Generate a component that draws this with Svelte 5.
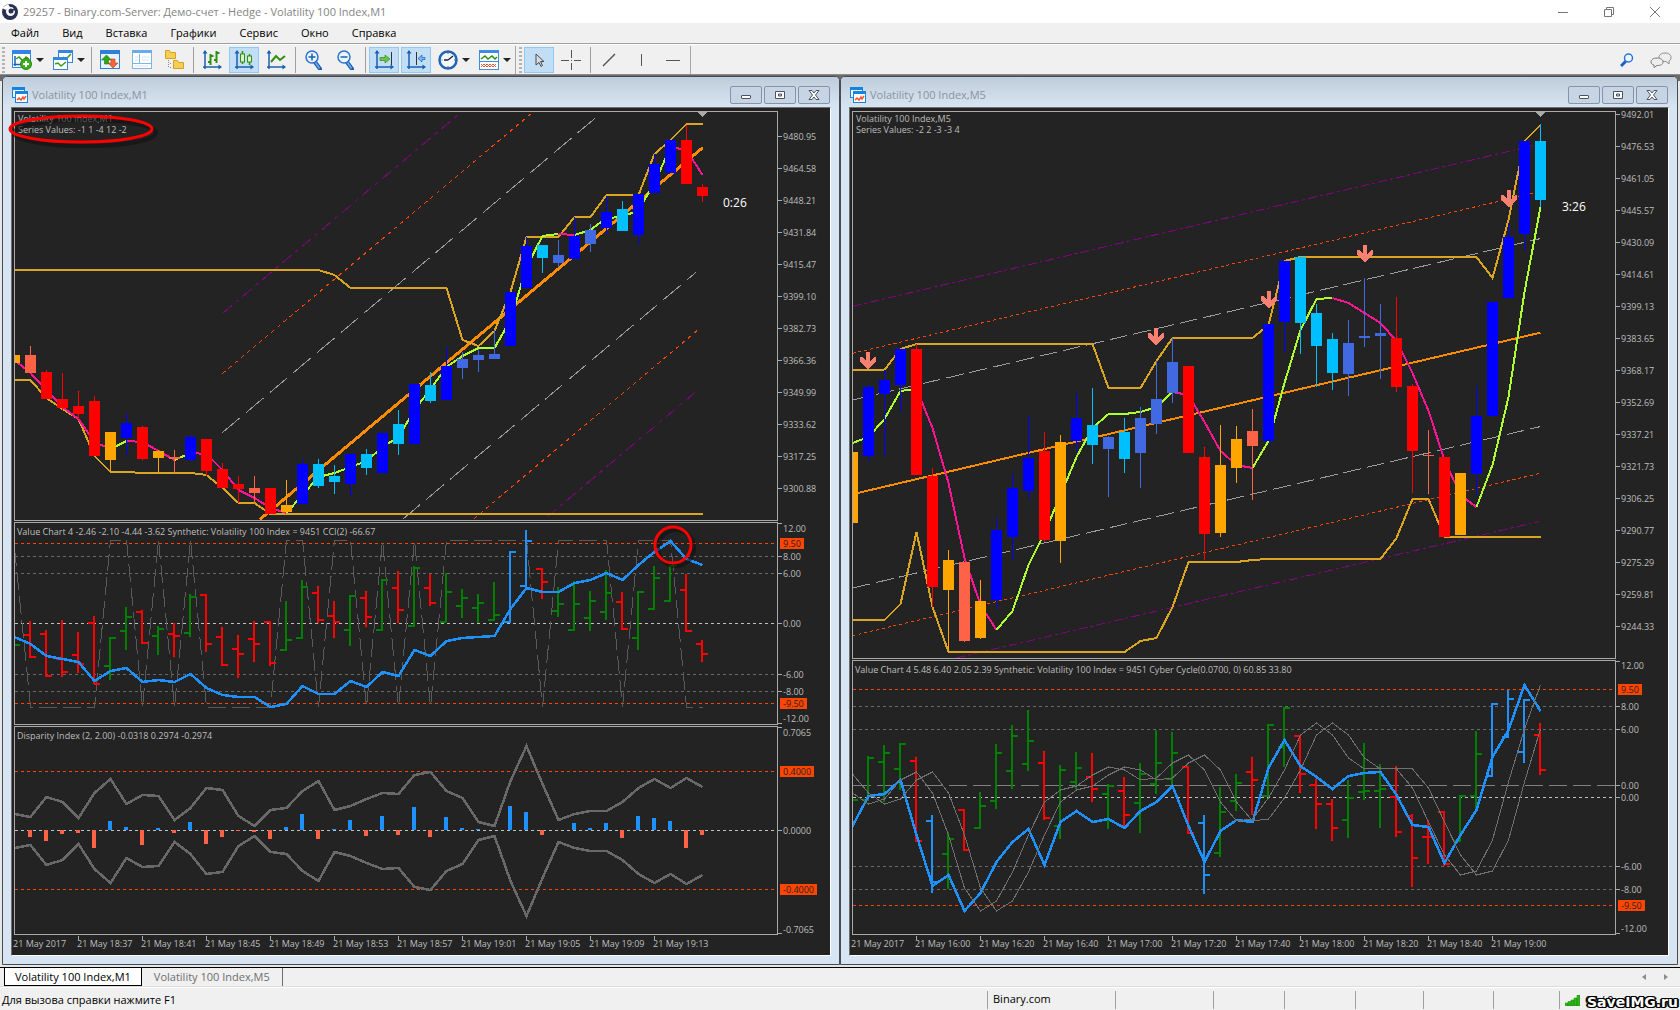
<script>
  const STEP = 16;
  const inks = {
    b: '#0000ff', c: '#00bfff', y: '#4169e1', r: '#ff0000', o: '#ffa500', t: '#ff6347',
    g: '#008000', d: '#1e90ff', p: '#ff1493', l: '#adff2f'
  };
  const GOLD = '#daa520';
  const GREY = '#696969';

  // Series values are stored in thirds of a pixel, measured from the pane's own origin.
  const cx = (i) => i * STEP - 1;
  const vy = (v, o) => Math.round(v / 3) + o;
  const path = (pts, o) => pts.map(([i, v]) => `${cx(i) + 0.5},${vy(v, o)}`).join(' ');
  const each = (values) => values.map((v, i) => [i, v]);
  const mirror = (values, axis) => values.map((v) => axis * 2 - v);

  const disparity = [898, 906, 845, 861, 909, 833, 791, 867, 839, 844, 915, 880, 818, 825, 904, 934, 886, 878, 828, 797, 885, 874, 852, 833, 836, 781, 770, 829, 850, 922, 933, 798, 692, 808, 914, 898, 889, 887, 860, 819, 792, 819, 788, 817];
  const cycle = [413, 447, 432, 375, 352, 415, 540, 700, 768, 739, 650, 540, 440, 406, 393, 360, 337, 345, 376, 368, 325, 301, 345, 440, 498, 492, 430, 345, 240, 203, 240, 310, 341, 340, 342, 400, 500, 600, 661, 648, 555, 380, 222, 90];

  const ladder = (first, step, from, gap, count) =>
    Array.from({ length: count }, (_, k) => ({ v: from + gap * k, text: (first - step * k).toFixed(2) }));

  const charts = [
    {
      id: 'm1',
      title: 'Volatility 100 Index,M1',
      mark: true,
      x0: -15,
      times: ['2017', '18:37', '18:41', '18:45', '18:49', '18:53', '18:57', '19:01', '19:05', '19:09', '19:13'],
      panes: [
        {
          y0: -12,
          marker: true,
          notes: [{ x: 3, y: 10, text: 'Volatility 100 Index,M1' }, { x: 3, y: 21, text: 'Series Values: -1 1 -4 12 -2' }],
          clock: { x: 708, y: 95, text: '0:26' },
          channels: [
            [668, 640, 1377, 42, '#800080', '12 5 4 5'], [667, 821, 1592, 42, '#ff4500', '4 4'], [667, 998, 1800, 42, '#9c9c9c', '23 8'],
            [1208, 1258, 2088, 517, '#9c9c9c', '23 8'], [1422, 1256, 2096, 688, '#ff4500', '4 4'], [1640, 1252, 2096, 868, '#800080', '12 5 4 5'],
            [780, 1258, 2108, 143, '#ff8c00', '', 3]
          ],
          lines: [
            { color: GOLD, w: 2, pts: [[0, 510], [19, 510], [20, 526], [21, 564], [27, 564], [28, 719], [29, 738], [30, 692], [31, 576], [32, 411], [34, 411], [35, 351], [36, 351], [37, 285], [39, 285], [40, 162], [41, 120], [42, 72], [43, 72]] },
            { color: GOLD, w: 2, pts: [[0, 840], [1, 840], [2, 895], [3, 927], [4, 957], [5, 1068], [6, 1116], [9, 1118], [11, 1119], [12, 1126], [13, 1163], [14, 1209], [15, 1209], [16, 1242], [43, 1242]] }
          ],
          trend: [780, 819, 870, 920, 957, 1025, 1047, 1022, 1027, 1052, 1080, 1060, 1062, 1110, 1170, 1195, 1225, 1238, 1185, 1130, 1120, 1100, 1082, 1040, 1010, 930, 868, 800, 769, 744, 744, 660, 500, 408, 402, 405, 390, 355, 350, 330, 250, 140, 150, 226],
          runs: [['p', 0, 6], ['l', 6, 7], ['p', 7, 10], ['l', 10, 11], ['p', 11, 17], ['l', 17, 34], ['p', 34, 35], ['l', 35, 41], ['p', 41, 43]],
          candles: [
            ['o', 765, 765, 789, 789], ['t', 738, 765, 819, 819], ['r', 810, 816, 897, 897], ['r', 819, 897, 924, 930], ['r', 873, 918, 942, 957], ['r', 888, 903, 1068, 1068], ['o', 996, 996, 1080, 1116], ['b', 941, 969, 1014, 1065], ['r', 978, 981, 1077, 1080], ['o', 1050, 1053, 1074, 1118], ['t', 1050, 1071, 1077, 1120],
            ['b', 1006, 1011, 1079, 1085], ['r', 1017, 1017, 1113, 1128], ['r', 1090, 1107, 1164, 1164], ['r', 1128, 1152, 1167, 1210], ['t', 1128, 1164, 1179, 1212], ['r', 1164, 1164, 1242, 1242], ['o', 1140, 1215, 1236, 1236], ['b', 1077, 1091, 1211, 1211], ['c', 1077, 1092, 1158, 1164], ['c', 1095, 1128, 1146, 1182], ['b', 1062, 1062, 1151, 1187],
            ['c', 1047, 1062, 1104, 1125], ['b', 998, 998, 1119, 1119], ['c', 930, 972, 1032, 1065], ['b', 852, 852, 1031, 1031], ['c', 816, 855, 903, 909], ['b', 741, 798, 899, 899], ['y', 756, 777, 804, 837], ['y', 747, 765, 780, 816], ['y', 690, 762, 777, 777], ['b', 576, 576, 738, 738], ['b', 411, 437, 563, 563],
            ['c', 435, 435, 474, 519], ['y', 420, 465, 489, 502], ['b', 352, 408, 477, 477], ['y', 372, 390, 432, 456], ['b', 287, 336, 384, 400], ['c', 303, 327, 393, 393], ['b', 282, 282, 405, 432], ['b', 162, 192, 279, 279], ['b', 120, 120, 218, 218], ['r', 75, 120, 252, 252], ['r', 252, 261, 288, 306]
          ],
          labels: ladder(9480.95, 16.37, 109, 96, 12)
        },
        {
          y0: -8,
          notes: [{ x: 2, y: 12, text: 'Value Chart 4 -2.46 -2.10 -4.44 -3.62 Synthetic: Volatility 100 Index = 9451 CCI(2) -66.67' }],
          levels: [[85, '#ff4500'], [124, GREY], [175, GREY], [325, '#c0c0c0'], [478, GREY], [529, GREY], [565, '#ff4500']],
          back: [{ color: '#5a5a5a', w: 1, dash: '18 6', pts: [[0, 100], [1, 577], [5, 577], [6, 76], [7, 76], [8, 577], [9, 76], [10, 577], [11, 76], [12, 577], [16, 577], [17, 76], [18, 76], [19, 577], [20, 76], [21, 76], [22, 577], [23, 76], [24, 577], [25, 76], [26, 577], [27, 76], [32, 76], [33, 577], [34, 76], [37, 76], [38, 577], [39, 76], [41, 76], [42, 577], [43, 577]] }],
          bars: [
            ['g', 390, 392, 390, 390], ['r', 318, 428, 360, 427], ['r', 345, 485, 356, 483], ['r', 315, 486, 433, 471], ['r', 351, 473, 420, 447], ['r', 303, 508, 324, 507], ['g', 367, 497, 453, 369], ['g', 276, 405, 348, 306], ['r', 286, 388, 291, 384], ['g', 333, 419, 363, 342], ['r', 324, 425, 356, 363],
            ['g', 237, 365, 354, 246], ['r', 238, 413, 240, 386], ['r', 336, 452, 366, 450], ['r', 360, 489, 402, 416], ['r', 318, 440, 372, 386], ['r', 318, 453, 321, 444], ['g', 258, 407, 405, 375], ['g', 195, 371, 369, 216], ['r', 213, 323, 234, 314], ['r', 258, 369, 302, 321], ['g', 240, 392, 345, 243],
            ['r', 228, 335, 248, 306], ['g', 192, 347, 345, 195], ['r', 168, 323, 218, 285], ['g', 153, 335, 333, 158], ['r', 177, 272, 219, 264], ['g', 175, 323, 321, 231], ['g', 222, 308, 272, 249], ['g', 237, 323, 279, 264], ['g', 201, 317, 315, 300], ['d', 108, 323, 321, 111], ['d', 45, 215, 213, 78],
            ['r', 159, 251, 162, 200], ['g', 216, 305, 288, 267], ['g', 197, 347, 345, 267], ['g', 228, 347, 308, 258], ['g', 165, 315, 291, 234], ['r', 231, 344, 261, 342], ['g', 228, 405, 369, 231], ['g', 153, 284, 282, 189], ['g', 150, 260, 258, 153], ['r', 177, 350, 225, 348], ['r', 375, 441, 386, 416]
          ],
          front: [{ color: '#1e90ff', w: 2.5, pts: each([367, 388, 422, 433, 441, 498, 468, 458, 500, 494, 501, 476, 520, 541, 545, 547, 576, 566, 512, 537, 537, 499, 517, 470, 484, 404, 423, 378, 370, 365, 362, 282, 218, 230, 230, 204, 196, 173, 195, 150, 110, 77, 133, 150]) }],
          ring: { x: 658, y: 22 },
          labels: [
            { v: 38, tick: 24, text: '12.00' }, { v: 85, text: '9.50', badge: 24 }, { v: 124, text: '8.00' }, { v: 175, text: '6.00' }, { v: 325, text: '0.00' },
            { v: 478, text: '-6.00' }, { v: 529, text: '-8.00' }, { v: 565, text: '-9.50', badge: 27 }, { v: 610, tick: 625, text: '-12.00' }
          ]
        },
        {
          y0: -212,
          notes: [{ x: 2, y: 12, text: 'Disparity Index (2, 2.00) -0.0318 0.2974 -0.2974' }],
          levels: [[769, '#ff4500'], [946, '#c0c0c0'], [1123, '#ff4500']],
          zero: 946,
          hist: [0, -20, -32, -11, -8, -53, 28, 10, -45, 7, -8, 25, -41, -20, -2, -5, -27, 10, 49, -26, 4, 30, -17, 43, -14, 70, -20, 40, 7, 4, 0, 73, 55, -14, 0, 22, 7, 22, -23, 43, 37, 28, -53, -14],
          front: [{ color: GREY, w: 2.5, pts: each(disparity) }, { color: GREY, w: 2.5, pts: each(mirror(disparity, 948)) }],
          labels: [
            { v: 650, tick: 637, text: '0.7065' }, { v: 769, text: '0.4000', badge: 34 }, { v: 946, text: '0.0000' },
            { v: 1123, text: '-0.4000', badge: 37 }, { v: 1241, tick: 1255, text: '-0.7065' }
          ]
        }
      ]
    },
    {
      id: 'm5',
      title: 'Volatility 100 Index,M5',
      x0: -13,
      times: ['2017', '16:00', '16:20', '16:40', '17:00', '17:20', '17:40', '18:00', '18:20', '18:40', '19:00'],
      panes: [
        {
          y0: -42,
          marker: true,
          notes: [{ x: 3, y: 10, text: 'Volatility 100 Index,M5' }, { x: 3, y: 21, text: 'Series Values: -2 2 -3 -3 4' }],
          clock: { x: 709, y: 99, text: '3:26' },
          channels: [
            [38, 709, 2078, 227, '#800080', '9 3 3 3'], [38, 850, 2078, 370, '#ff4500', '3 3'], [38, 990, 2100, 506, '#9c9c9c', '18 6'],
            [38, 1554, 2100, 1070, '#9c9c9c', '18 6'], [38, 1697, 2096, 1211, '#ff4500', '3 3'], [348, 1764, 2096, 1355, '#800080', '9 3 3 3'],
            [53, 1269, 2101, 788, '#ff8c00', '', 2]
          ],
          lines: [
            { color: GOLD, w: 2, pts: [[0, 900], [2, 900], [3, 837], [4, 822], [15, 822], [16, 954], [18, 954], [19, 873], [20, 804], [25, 804], [26, 765], [27, 573], [28, 561], [39, 561], [40, 624], [41, 450], [42, 213], [43, 165]] },
            { color: GOLD, w: 2, pts: [[0, 1650], [2, 1650], [3, 1602], [4, 1387], [5, 1612], [6, 1746], [17, 1746], [18, 1713], [19, 1705], [20, 1612], [21, 1477], [24, 1477], [25, 1469], [26, 1467], [33, 1467], [34, 1403], [35, 1287], [36, 1287], [37, 1400], [43, 1400]] }
          ],
          trend: [1119, 1100, 1047, 963, 958, 1075, 1240, 1463, 1605, 1680, 1622, 1485, 1390, 1275, 1160, 1075, 1032, 1032, 1025, 1010, 967, 975, 1055, 1142, 1185, 1195, 1113, 940, 780, 687, 684, 700, 730, 760, 812, 910, 1022, 1170, 1275, 1310, 1185, 980, 665, 410],
          runs: [['l', 0, 4], ['p', 4, 9], ['l', 9, 20], ['p', 20, 25], ['l', 25, 30], ['p', 30, 39], ['l', 39, 43]],
          arrows: [[15, 256], [303, 232], [416, 195], [512, 149], [656, 94]],
          candles: [
            ['o', 1146, 1146, 1358, 1358], ['b', 945, 951, 1157, 1173], ['b', 900, 930, 971, 1157], ['b', 837, 837, 945, 1025], ['r', 822, 837, 1215, 1215], ['r', 1194, 1218, 1551, 1611], ['o', 1440, 1470, 1560, 1746], ['t', 1476, 1476, 1713, 1716], ['o', 1530, 1593, 1704, 1707], ['b', 1344, 1380, 1590, 1618], ['b', 1212, 1254, 1401, 1470],
            ['b', 1038, 1164, 1263, 1287], ['r', 1086, 1143, 1410, 1416], ['o', 1095, 1116, 1413, 1479], ['b', 969, 1044, 1113, 1146], ['c', 954, 1065, 1125, 1182], ['y', 1097, 1101, 1137, 1281], ['c', 1044, 1086, 1167, 1209], ['y', 1011, 1044, 1149, 1254], ['y', 873, 987, 1062, 1092], ['y', 804, 876, 969, 999], ['r', 888, 888, 1149, 1149],
            ['r', 1131, 1161, 1392, 1470], ['o', 1065, 1185, 1389, 1401], ['o', 1068, 1107, 1194, 1239], ['t', 1017, 1083, 1128, 1290], ['b', 762, 762, 1113, 1113], ['b', 573, 573, 755, 846], ['c', 561, 561, 759, 852], ['c', 702, 729, 828, 951], ['c', 789, 807, 909, 960], ['y', 750, 819, 912, 978], ['y', 624, 798, 804, 831],
            ['y', 702, 789, 798, 927], ['r', 681, 804, 951, 966], ['r', 942, 948, 1143, 1269], ['t', 1080, 1155, 1158, 1272], ['r', 1161, 1161, 1401, 1401], ['o', 1209, 1209, 1395, 1395], ['b', 948, 1038, 1211, 1275], ['b', 696, 696, 1037, 1037], ['b', 459, 501, 683, 683], ['b', 213, 213, 491, 543], ['c', 162, 213, 390, 410]
          ],
          labels: ladder(9492.01, 15.48, 133, 96, 17)
        },
        {
          y0: -6,
          notes: [{ x: 2, y: 12, text: 'Value Chart 4 5.48 6.40 2.05 2.39 Synthetic: Volatility 100 Index = 9451 Cyber Cycle(0.0700, 0) 60.85 33.80' }],
          levels: [[103, '#ff4500'], [154, GREY], [223, GREY], [391, '#808080', '18 6'], [427, '#c0c0c0'], [634, GREY], [703, GREY], [751, '#ff4500']],
          back: [],
          bars: [
            ['g', 435, 437, 435, 435], ['g', 303, 437, 435, 309], ['g', 270, 440, 321, 294], ['g', 264, 404, 342, 267], ['r', 306, 560, 318, 558], ['d', 480, 713, 498, 680], ['g', 531, 702, 597, 552], ['r', 462, 587, 465, 585], ['g', 411, 521, 519, 453], ['g', 267, 461, 438, 294], ['g', 210, 402, 348, 243],
            ['g', 165, 347, 327, 258], ['r', 288, 494, 324, 489], ['g', 330, 551, 513, 345], ['g', 291, 402, 381, 339], ['r', 294, 440, 366, 402], ['g', 387, 521, 417, 393], ['r', 366, 518, 408, 480], ['g', 324, 533, 444, 356], ['g', 225, 416, 387, 324], ['g', 231, 393, 372, 294], ['r', 333, 536, 336, 534],
            ['d', 480, 716, 504, 660], ['g', 396, 605, 594, 471], ['g', 357, 467, 438, 384], ['r', 306, 480, 351, 375], ['g', 207, 425, 423, 210], ['g', 156, 335, 276, 159], ['r', 240, 413, 243, 357], ['r', 372, 521, 389, 447], ['r', 432, 557, 447, 519], ['g', 375, 548, 495, 429], ['g', 264, 434, 411, 408],
            ['g', 327, 518, 408, 402], ['r', 333, 545, 426, 531], ['r', 477, 695, 483, 609], ['r', 495, 627, 546, 546], ['r', 468, 632, 471, 627], ['g', 420, 560, 558, 423], ['g', 228, 470, 423, 297], ['d', 144, 365, 363, 147], ['d', 105, 248, 246, 132], ['d', 132, 323, 291, 135], ['r', 204, 360, 240, 345]
          ],
          front: [
            { color: '#1e90ff', w: 2.5, pts: each([512, 423, 416, 375, 540, 692, 660, 768, 714, 621, 562, 522, 630, 500, 467, 500, 491, 519, 467, 440, 394, 512, 620, 528, 495, 500, 340, 255, 333, 365, 402, 364, 355, 350, 420, 510, 516, 624, 540, 465, 305, 225, 90, 168]) },
            { color: '#707070', w: 1, pts: each(cycle) },
            { color: '#707070', w: 1, pts: each([357, ...cycle.slice(0, -1)]) }
          ],
          labels: [
            { v: 31, tick: 18, text: '12.00' }, { v: 103, text: '9.50', badge: 24 }, { v: 154, text: '8.00' }, { v: 223, text: '6.00' }, { v: 391, text: '0.00' }, { v: 427, text: '0.00' },
            { v: 634, text: '-6.00' }, { v: 703, text: '-8.00' }, { v: 751, text: '-9.50', badge: 27 }, { v: 820, tick: 835, text: '-12.00' }
          ]
        }
      ]
    }
  ];

  const menu = ['Файл', 'Вид', 'Вставка', 'Графики', 'Сервис', 'Окно', 'Справка'];
  const standard = [
    { icon: 'newchart', label: 'Новый график', drop: true }, { icon: 'profiles', label: 'Профили', drop: true }, null,
    { icon: 'market', label: 'Обзор рынка' }, { icon: 'data', label: 'Окно данных' }, { icon: 'navigator', label: 'Навигатор' }, null,
    { icon: 'bars', label: 'Бары' }, { icon: 'candles', label: 'Свечи', on: true }, { icon: 'line', label: 'Линия' }, null,
    { icon: 'zoomin', label: 'Увеличить' }, { icon: 'zoomout', label: 'Уменьшить' }, null,
    { icon: 'scroll', label: 'Автопрокрутка', on: true }, { icon: 'shift', label: 'Сдвиг графика', on: true },
    { icon: 'period', label: 'Период', drop: true }, { icon: 'template', label: 'Шаблоны', drop: true }
  ];
  const drawing = [
    { icon: 'cursor', label: 'Курсор', on: true }, { icon: 'cross', label: 'Перекрестие' }, null,
    { icon: 'trendline', label: 'Трендовая линия' }, { icon: 'vline', label: 'Вертикальная линия' }, { icon: 'hline', label: 'Горизонтальная линия' }
  ];
</script>

{#snippet axes()}
  <path d="M3 1v18M1 17h18" stroke="#1a5fb4" stroke-width="1.500" fill="none" />
  <path d="M3 0l-2.500 3.500h5zM20 17l-3.500 -2.500v5z" fill="#1a5fb4" />
{/snippet}

{#snippet glass(plus)}
  <path d="M11 12l5 7" stroke="#1c5fae" stroke-width="4" stroke-linecap="round" />
  <path d="M11.500 12.500l4 6" stroke="#6fb0ee" stroke-width="1.500" />
  <circle cx="8" cy="7" r="6" fill="#eaf5ff" stroke="#2c74c9" stroke-width="1.500" />
  <path d={plus ? 'M4.500 7h7M8 3.500v7' : 'M4.500 7h7'} stroke="#1c5fae" stroke-width="1.500" />
{/snippet}

{#snippet pic(name)}
  <svg class="pic" viewBox="0 0 20 20" aria-hidden="true">
    {#if name === 'newchart'}
      <rect x=".5" y=".5" width="18" height="17" fill="#fff" stroke="#3584e4" /><rect x="0" y="0" width="19" height="4" fill="#3584e4" />
      <path d="M3 6v10M1.500 14.500h14" stroke="#1a5fb4" stroke-width="1.500" fill="none" />
      <path d="M4 9l3-2 4 4 3-4 3 2" stroke="#2f9e12" stroke-width="1.500" fill="none" />
      <circle cx="14" cy="14" r="5.500" fill="#3fae1c" stroke="#2b8a10" /><path d="M14 11v6M11 14h6" stroke="#fff" stroke-width="2" />
    {:else if name === 'profiles'}
      <rect x="5.500" y=".5" width="14" height="12" fill="#fff" stroke="#3584e4" /><rect x="5" y="0" width="15" height="3" fill="#3584e4" />
      <path d="M10 7l3 2 5-5" stroke="#2f9e12" stroke-width="1.500" fill="none" />
      <rect x=".5" y="7.500" width="14" height="12" fill="#fff" stroke="#3584e4" /><rect x="0" y="7" width="15" height="3" fill="#3584e4" />
      <path d="M2 14l3-1 3 3 5-4" stroke="#2f9e12" stroke-width="1.500" fill="none" />
    {:else if name === 'market'}
      <rect x=".5" y=".5" width="19" height="18" fill="#e6f2ff" stroke="#2f7fd6" /><rect x="0" y="0" width="20" height="4" fill="#2f7fd6" />
      <path d="M6.500 5l5 5h-3v4h-4v-4h-3z" fill="#2fa51a" stroke="#1e7a0e" stroke-width=".6" />
      <path d="M13 18l5-5h-3v-4h-4v4h-3z" fill="#f2673a" stroke="#c23c12" stroke-width=".6" />
    {:else if name === 'data'}
      <rect x=".5" y=".5" width="19" height="18" fill="#fff" stroke="#7db4ea" /><rect x="0" y="0" width="20" height="3" fill="#6aabec" />
      <path d="M7.500 4v9M1 13.500h18" stroke="#7db4ea" /><path d="M3 7h3M3 10h3M10 7h7M10 10h7M3 16h13" stroke="#d5e3f1" />
    {:else if name === 'navigator'}
      <path d="M1.500 .5h4l1 2h5v6h-10z" fill="#f6cf50" stroke="#d3a12b" />
      <path d="M4.500 10v7M6 13.500h2M6 17.500h2" stroke="#8a8a8a" fill="none" stroke-dasharray="1 1" />
      <path d="M9.500 10.500h4l1 2h5v6h-10z" fill="#f6cf50" stroke="#d3a12b" />
    {:else if name === 'bars'}
      {@render axes()}<path d="M8.500 4v11M6 12h2.500M8.500 6h3M14.500 1v12M14.500 3h3M12 10h2.500" stroke="#2f8f12" stroke-width="2" fill="none" />
    {:else if name === 'candles'}
      {@render axes()}<path d="M8.500 1v13M15.500 4v11" stroke="#2f8f12" stroke-width="1.500" />
      <rect x="6.500" y="4" width="4" height="8" fill="#d9f2c9" stroke="#2f8f12" /><rect x="13.500" y="6" width="4" height="6" fill="#d9f2c9" stroke="#2f8f12" />
    {:else if name === 'line'}
      {@render axes()}<path d="M5 12l5-6 4 4 5-4" stroke="#2f8f12" stroke-width="2" fill="none" />
    {:else if name === 'zoomin'}
      {@render glass(true)}
    {:else if name === 'zoomout'}
      {@render glass(false)}
    {:else if name === 'scroll'}
      {@render axes()}<path d="M6 7.500h5v-2.500l5 4-5 4v-2.500H6z" fill="#6cc24a" stroke="#2f8f12" stroke-width=".7" /><path d="M17.500 2v13" stroke="#333" />
    {:else if name === 'shift'}
      {@render axes()}<path d="M10.500 2v13" stroke="#333" /><path d="M19 7.500h-3v-2.500l-4 3.500 4 3.500v-2.500h3z" fill="#7db9f5" stroke="#1a5fb4" stroke-width=".7" />
    {:else if name === 'period'}
      <circle cx="10" cy="10" r="8.500" fill="#f2f8ff" stroke="#2463b0" stroke-width="2.500" /><path d="M10 10l5-4M10 10H6" stroke="#222" stroke-width="1.300" />
      <path d="M10 3v1M10 16v1M3.500 10h1M16 10h1" stroke="#555" />
    {:else if name === 'template'}
      <rect x=".5" y=".5" width="19" height="19" fill="#fff" stroke="#3a8de0" /><rect x="0" y="0" width="20" height="3" fill="#3a8de0" /><path d="M1 11.500h18" stroke="#3a8de0" />
      <path d="M2 9l4-3 3 3 4-3 3 3 2-2" stroke="#2f8f12" stroke-width="1.500" fill="none" />
      <path d="M2 17l3-3 3 3 3-3 3 3 3-3M2 14l3 3 3-3 3 3 3-3 3 3" stroke="#e0563a" fill="none" />
    {:else if name === 'cursor'}
      <path d="M7 4v11l3-2.500 2 4 1.500-1-2-4h3.500z" fill="#d4dbe2" stroke="#4a4a4a" />
    {:else if name === 'cross'}
      <path d="M10.500 0v8M10.500 13v7M0 10.500h8M13 10.500h7" stroke="#555" fill="none" /><rect x="10" y="10" width="1" height="1" fill="#555" />
    {:else if name === 'trendline'}
      <path d="M4 16L16 4" stroke="#555" stroke-width="1.500" />
    {:else if name === 'vline'}
      <path d="M10.500 4v12" stroke="#555" />
    {:else if name === 'hline'}
      <path d="M3 10.500h14" stroke="#555" />
    {/if}
  </svg>
{/snippet}

{#snippet tools(items)}
  {#each items as tool}
    {#if tool}
      <button class="tool" class:on={tool.on} class:drop={tool.drop} aria-label={tool.label}>
        {@render pic(tool.icon)}
        {#if tool.drop}<span class="caret"></span>{/if}
      </button>
    {:else}
      <span class="sep"></span>
    {/if}
  {/each}
{/snippet}

{#snippet curve(line, y0)}
  <polyline points={path(line.pts, y0)} fill="none" stroke={line.color} stroke-width={line.w} stroke-dasharray={line.dash} />
{/snippet}

{#snippet plot(pane, x0)}
  <svg class="plot">
    {#each pane.levels ?? [] as [v, color, dash]}
      <line x1="0" x2="100%" y1={vy(v - 1, pane.y0) + 0.5} y2={vy(v - 1, pane.y0) + 0.5} stroke={color} stroke-dasharray={dash ?? '3 3'} />
    {/each}
    {#each pane.channels ?? [] as [x1, y1, x2, y2, color, dash, w]}
      <line x1={x1 / 3 + x0} y1={y1 / 3 + pane.y0} x2={x2 / 3 + x0} y2={y2 / 3 + pane.y0} stroke={color} stroke-width={w ?? 1} stroke-dasharray={dash} />
    {/each}
    {#each pane.lines ?? [] as line}{@render curve(line, pane.y0)}{/each}
    {#each pane.back ?? [] as line}{@render curve(line, pane.y0)}{/each}
    {#each pane.runs ?? [] as [ink, from, to]}
      <polyline points={path(each(pane.trend).slice(from, to + 1), pane.y0)} fill="none" stroke={inks[ink]} stroke-width="2" />
    {/each}
    {#each pane.arrows ?? [] as [x, y]}
      <path transform="translate({x} {y})" d="M-2 -16h4v9l4-4h2v4l-7 8h-2l-7-8v-4h2l4 4z" fill="#fa8072" />
    {/each}
    {#each pane.candles ?? [] as [ink, high, top, bottom, low], i}
      <rect x={cx(i)} y={vy(high, pane.y0)} width="1" height={Math.round((low - high) / 3)} fill={inks[ink]} />
      <rect x={cx(i) - 5} y={vy(top, pane.y0)} width="11" height={Math.max(1, Math.round((bottom - top) / 3))} fill={inks[ink]} />
    {/each}
    {#each pane.bars ?? [] as [ink, high, low, open, close], i}
      <rect x={cx(i) - 1} y={vy(high, pane.y0)} width="2" height={Math.round((low - high) / 3)} fill={inks[ink]} />
      <rect x={cx(i) - 6} y={vy(open, pane.y0) - 1} width="6" height="2" fill={inks[ink]} />
      <rect x={cx(i)} y={vy(close, pane.y0) - 1} width="6" height="2" fill={inks[ink]} />
    {/each}
    {#each pane.hist ?? [] as h, i}
      <rect x={cx(i) - 2} y={h > 0 ? vy(pane.zero - h, pane.y0) : vy(pane.zero, pane.y0)} width="4" height={Math.round(Math.abs(h) / 3)} fill={h > 0 ? '#1e90ff' : '#ff6347'} />
    {/each}
    {#each pane.front ?? [] as line}{@render curve(line, pane.y0)}{/each}
    {#if pane.marker}<path d="M682 0h10l-5 5z" fill="#a9a9a9" />{/if}
    {#if pane.ring}
      <circle class="ring shade" cx={pane.ring.x + 3} cy={pane.ring.y + 3} r="18" />
      <circle class="ring" cx={pane.ring.x} cy={pane.ring.y} r="18" />
    {/if}
    {#each pane.notes as note}<text x={note.x} y={note.y}>{note.text}</text>{/each}
    {#if pane.clock}<text class="clock" x={pane.clock.x} y={pane.clock.y}>{pane.clock.text}</text>{/if}
  </svg>
{/snippet}

{#snippet scale(pane)}
  <svg class="scale">
    {#each pane.labels as label}
      {#if label.badge}
        <rect x="2" y={vy(label.v, pane.y0) - 4} width={label.badge} height="11" fill="#ff4500" />
      {:else}
        <rect x="0" y={vy((label.tick ?? label.v) - 1, pane.y0 + 1)} width="4" height="1" fill="#a9a9a9" />
      {/if}
      <text class:dark={label.badge} x="5" y={vy(label.v, pane.y0) + 5}>{label.text}</text>
    {/each}
  </svg>
{/snippet}

<div class="app">
  <header class="titlebar">
    <svg class="logo" viewBox="0 0 16 16" aria-hidden="true">
      <circle cx="8" cy="8" r="8" fill="#2a3052" /><path d="M0 4L6 0 8 3 4 6z" fill="#fff" /><circle cx="8.500" cy="7.500" r="4.500" fill="#fff" /><circle cx="9" cy="7" r="2.500" fill="#2a3052" /><path d="M9 6l5-3 1 4z" fill="#2a3052" />
    </svg>
    <h1>29257 - Binary.com-Server: Демо-счет - Hedge - Volatility 100 Index,M1</h1>
    <div class="syskeys">
      <button aria-label="Свернуть"><svg viewBox="0 0 12 12"><path d="M1 6.500h10" /></svg></button>
      <button aria-label="Развернуть"><svg viewBox="0 0 12 12"><path d="M1.500 3.500h7v7h-7zM3.500 3V1.500h7v7H9" /></svg></button>
      <button aria-label="Закрыть"><svg viewBox="0 0 12 12"><path d="M1 1l10 10M11 1L1 11" /></svg></button>
    </div>
  </header>

  <nav class="menu">
    {#each menu as item}<button>{item}</button>{/each}
  </nav>

  <div class="toolbar">
    <span class="grip"></span>
    <div class="group">{@render tools(standard)}</div>
    <span class="grip second"></span>
    <div class="group">{@render tools(drawing)}</div>
    <div class="right">
      <button class="mini" aria-label="Поиск">
        <svg viewBox="0 0 14 14"><path d="M6 8l-5 5" stroke="#1d5fc4" stroke-width="3" /><circle cx="8.500" cy="5" r="4" fill="#eef6ff" stroke="#2a74d8" stroke-width="1.500" /></svg>
      </button>
      <button class="mini wide" aria-label="Чат">
        <svg viewBox="0 0 22 16"><path d="M15 1c4 0 6 2 6 4.500 0 2-1 3-2 3.500v3l-3-2.500c-5 0-7-1.500-7-4S11 1 15 1z" fill="#eee" stroke="#8a8a8a" /><path d="M7 6c3.500 0 6 1.500 6 4s-2 3.500-6 3.500L4 15.500v-2.500c-2-.5-3-1.500-3-3C1 7.500 3.500 6 7 6z" fill="#eee" stroke="#7c7c7c" /></svg>
      </button>
    </div>
  </div>

  <main class="desk">
    {#each charts as chart}
      <section class="window" aria-label={chart.title}>
        <div class="caption">
          <svg class="badge" viewBox="0 0 16 16" aria-hidden="true">
            <rect x=".5" y=".5" width="12" height="10" fill="#eef6ff" stroke="#1583e0" /><rect x="0" y="0" width="13" height="3" fill="#1583e0" />
            <rect x="3.500" y="4.500" width="12" height="11" fill="#fff" stroke="#1583e0" /><rect x="3" y="4" width="13" height="3" fill="#1583e0" />
            <path d="M5 13l2-2 2 2 2-3 1 2 2-3" stroke="#f0562c" stroke-width="1.500" fill="none" />
          </svg>
          <h2>{chart.title}</h2>
          <div class="keys">
            <button aria-label="Свернуть окно"><svg viewBox="0 0 12 12"><rect x="1.500" y="6.500" width="9" height="3" rx=".5" /></svg></button>
            <button aria-label="Развернуть окно"><svg viewBox="0 0 12 12"><path d="M1.500 2.500h9v7h-9zM4.500 5h3v2h-3z" fill-rule="evenodd" /></svg></button>
            <button aria-label="Закрыть окно"><svg viewBox="0 0 12 12"><path d="M1 1.500h3l2 2.500 2-2.500h3l-3.500 4.500 3.500 4.500H8L6 8l-2 2.500H1L4.500 6z" /></svg></button>
          </div>
        </div>
        <div class="chart {chart.id}">
          {#each chart.panes as pane}
            {@render plot(pane, chart.x0)}
            {@render scale(pane)}
          {/each}
          <svg class="times">
            {#each chart.times as t, k}
              {#if k}<rect x={k * 64} y="0" width="1" height="4" fill="#a9a9a9" />{/if}
              <text x={k * 64 - 1} y="11">21 May {t}</text>
            {/each}
          </svg>
        </div>
        {#if chart.mark}
          <svg class="oval" viewBox="0 0 154 40" aria-hidden="true">
            <ellipse class="ring shade" cx="77" cy="21" rx="71" ry="13" /><ellipse class="ring" cx="73" cy="17" rx="71" ry="13" />
          </svg>
        {/if}
      </section>
    {/each}
  </main>

  <div class="tabs">
    <button class="tab active">Volatility 100 Index,M1</button>
    <button class="tab">Volatility 100 Index,M5</button>
    <div class="arrows">
      <button aria-label="Назад"><svg viewBox="0 0 4 6"><path d="M4 0v6L0 3z" /></svg></button>
      <button aria-label="Вперед"><svg viewBox="0 0 4 6"><path d="M0 0v6l4-3z" /></svg></button>
    </div>
  </div>

  <footer class="status">
    <span class="hint">Для вызова справки нажмите F1</span>
    <span class="cell server">Binary.com</span>
    <span class="cell w98"></span>
    <span class="cell w71"></span>
    <span class="cell w71"></span>
    <span class="cell w68"></span>
    <span class="cell w70"></span>
    <span class="cell w66"></span>
    <span class="cell net">
      <svg viewBox="0 0 15 11" aria-hidden="true"><path d="M0 8h3v3H0zM3 6.500h3V11H3zM6 5h3v6H6zM9 3h3v8H9zM12 0h3v11h-3z" fill="#2fb81c" stroke="#1b8a0c" stroke-width=".5" /></svg>
      67 / 0
    </span>
    <span class="stamp">SaveIMG.ru</span>
  </footer>
</div>

<style>
  :global(body) { margin: 0; }
  .app { display: flex; flex-direction: column; height: 100vh; overflow: hidden; background: #f0f0f0; color: #000; font: 11px/16px "Open Sans", "Noto Sans", sans-serif; }
  button { margin: 0; padding: 0; border: 0; background: none; font: inherit; color: inherit; }
  h1, h2 { margin: 0; font-size: 11px; font-weight: 400; color: #858585; white-space: nowrap; }
  h2 { color: #8a939c; }

  .titlebar { display: flex; align-items: center; height: 23px; padding: 0 2px; background: #fff; gap: 5px; }
  .logo { width: 16px; height: 16px; }
  .syskeys { display: flex; margin-left: auto; }
  .syskeys button { display: grid; place-items: center; width: 46px; height: 20px; }
  .syskeys svg { width: 12px; height: 12px; fill: none; stroke: #777; }

  .menu { display: flex; align-items: center; gap: 23px; height: 20px; padding-left: 11px; border-bottom: 1px solid #a0a0a0; }

  .toolbar { display: flex; align-items: center; height: 30px; border-top: 1px solid #fff; box-sizing: border-box; }
  .grip { width: 3px; height: 26px; margin-left: 2px; margin-right: 2px; background: repeating-linear-gradient(#b4b4b4 0 2px, #f0f0f0 2px 4px); }
  .grip.second { margin-left: 3px; }
  .group { display: flex; align-items: center; gap: 2px; padding-right: 2px; border-right: 1px solid #a8a8a8; height: 28px; }
  .tool { display: flex; align-items: center; justify-content: center; width: 30px; height: 26px; box-sizing: border-box; }
  .tool.drop { width: 39px; justify-content: space-between; padding: 0 2px 0 5px; }
  .tool.on { background: #c2def5; border: 1px solid #90c8f6; }
  .pic { width: 20px; height: 20px; }
  .caret { border: 4px solid transparent; border-top-color: #222; border-bottom: 0; }
  .sep { width: 1px; height: 26px; margin: 0 1px 0 2px; background: #a0a0a0; }
  .right { display: flex; align-items: center; gap: 16px; margin-left: auto; padding-right: 8px; }
  .mini { display: block; width: 14px; height: 14px; }
  .mini.wide { width: 22px; height: 16px; }
  .mini svg { display: block; width: 100%; height: 100%; fill: none; }

  .desk { flex: 1; min-height: 0; display: grid; grid-template-columns: 1fr 1fr; padding: 1px 2px 2px; border-top: 1px solid #8c8c8c; background: linear-gradient(#6a6a6a 0 6px, #e6e6e6 6px); }
  .window { position: relative; display: flex; flex-direction: column; min-width: 0; border: 1px solid #464c54; border-radius: 5px 5px 0 0; background: #d7e4f2; padding: 0 8px 8px; }
  .caption { display: flex; align-items: center; flex: none; height: 30px; margin: 0 -8px; padding: 6px 9px 0; border-radius: 4px 4px 0 0; background: linear-gradient(#bfcddb, #d7e4f2); box-sizing: border-box; }
  .badge { width: 16px; height: 16px; margin-right: 4px; }
  .keys { display: flex; gap: 2px; margin-left: auto; }
  .keys button { display: grid; place-items: center; width: 32px; height: 18px; box-sizing: border-box; border: 1px solid #8494aa; border-radius: 2px; background: #c6d4e3; }
  .keys svg { width: 12px; height: 12px; fill: #fff; stroke: #4a5264; }

  .chart { flex: 1; min-height: 0; display: grid; grid-template-columns: minmax(0, 1fr) 52px; row-gap: 1px; padding: 3px 0 0 2px; border: 1px solid; border-color: #6e6e6e #fff #fff #6e6e6e; background: #232323; }
  .chart.m1 { grid-template-rows: minmax(0, 410fr) minmax(0, 203fr) minmax(0, 209fr) 19px; }
  .chart.m5 { grid-template-rows: minmax(0, 548fr) minmax(0, 275fr) 19px; }
  .plot, .scale, .times { display: block; width: 100%; height: 100%; min-height: 0; box-sizing: border-box; shape-rendering: crispEdges; font: 9px "Open Sans", "Noto Sans", sans-serif; fill: #bebebe; }
  .plot { border: 1px solid #a9a9a9; overflow: hidden; }
  .scale { overflow: visible; }
  .times { grid-column: 1 / -1; overflow: visible; }
  .dark { fill: #232323; }
  .clock { fill: #fff; font-size: 12px; }
  .ring { fill: none; stroke: #f00; stroke-width: 3; shape-rendering: auto; }
  .ring.shade { stroke: #111; stroke-width: 4; opacity: .6; }
  .oval { position: absolute; left: 5px; top: 35px; width: 154px; height: 40px; }

  .tabs { display: flex; align-items: flex-start; height: 20px; box-sizing: border-box; padding-left: 4px; border-top: 1px solid #000; border-bottom: 1px solid #dcdcdc; }
  .tab { height: 18px; padding: 0 12px; color: #6e6e6e; border-right: 1px solid #6e6e6e; }
  .tab.active { background: #fff; color: #000; border: 1px solid #000; border-top: 0; padding: 0 10px; }
  .arrows { display: flex; gap: 18px; margin: 6px 12px 0 auto; }
  .arrows svg { display: block; width: 4px; height: 6px; fill: #8c8c8c; }

  .status { position: relative; display: flex; align-items: center; height: 23px; border-top: 1px solid #fff; padding-top: 2px; box-sizing: border-box; white-space: nowrap; }
  .hint { flex: 1; padding-left: 2px; }
  .cell { height: 18px; box-sizing: border-box; border-left: 1px solid #a0a0a0; padding-left: 5px; }
  .server { width: 128px; }
  .w98 { width: 98px; }
  .w71 { width: 71px; }
  .w68 { width: 68px; }
  .w70 { width: 70px; }
  .w66 { width: 66px; }
  .net { display: flex; align-items: center; gap: 5px; width: 121px; }
  .net svg { width: 15px; height: 11px; }
  .stamp { position: absolute; right: 2px; bottom: -1px; color: #fff; font: bold 14px/18px "DejaVu Sans", sans-serif; text-shadow: 1px 0 #000, -1px 0 #000, 0 1px #000, 0 -1px #000, 1px 1px #000, -1px -1px #000, 1px -1px #000, -1px 1px #000, 2px 0 #000, -2px 0 #000; }
</style>
